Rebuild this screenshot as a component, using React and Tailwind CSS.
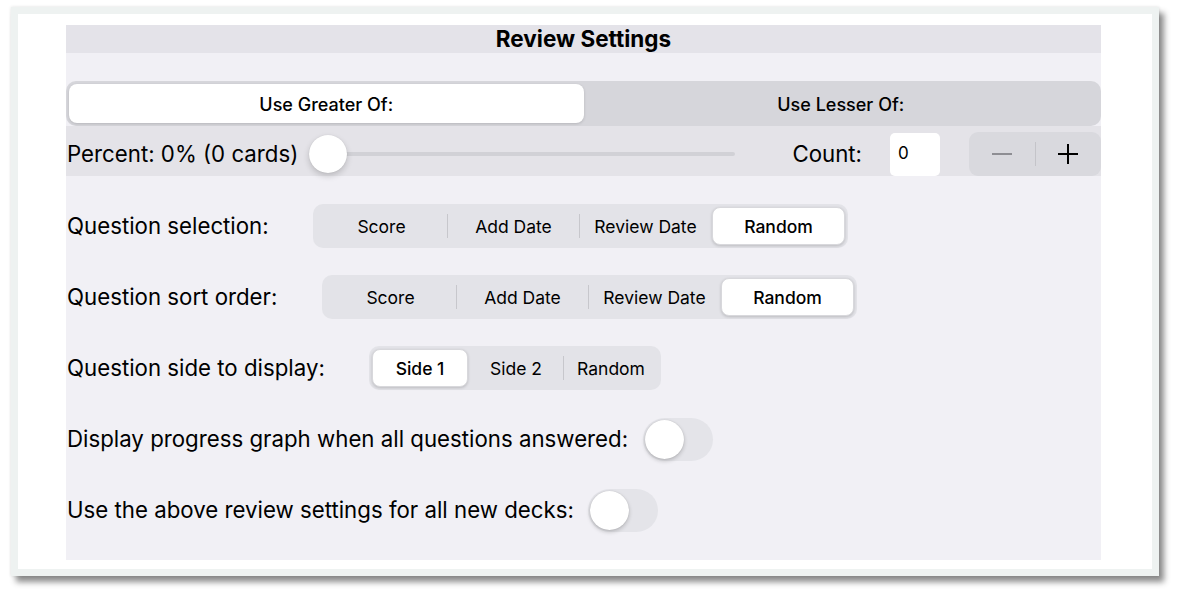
import React from "react";

function Segmented({ items, selected, className }) {
  const nodes = [];
  items.forEach((it, i) => {
    if (i > 0) {
      const show = i - 1 !== selected && i !== selected;
      nodes.push(
        <div
          key={"d" + i}
          className={
            "w-px h-[24px] self-center flex-none " +
            (show ? "bg-[#c7c7cc]" : "bg-transparent")
          }
        />
      );
    }
    const sel = i === selected;
    nodes.push(
      <div
        key={"s" + i}
        className={
          "flex-1 flex items-center justify-center pt-[2px] text-[17.5px] text-black whitespace-nowrap " +
          (sel
            ? "bg-white rounded-[8px] font-medium shadow-[0_1px_3px_rgba(0,0,0,0.18)] border-[0.5px] border-[#d8d8dc]"
            : "")
        }
      >
        {it}
      </div>
    );
  });
  return (
    <div
      className={
        "h-[44px] bg-[#e3e3e8] rounded-[10px] p-[3px] flex flex-none " + className
      }
    >
      {nodes}
    </div>
  );
}

function Toggle() {
  return (
    <div className="w-[70px] h-[43px] rounded-full bg-[#e4e4e9] p-[2px] flex items-center flex-none">
      <div className="w-[39px] h-[39px] rounded-full bg-white shadow-[0_2px_4px_rgba(0,0,0,0.2),0_0_1px_rgba(0,0,0,0.2)]" />
    </div>
  );
}

export default function App() {
  return (
    <div className="w-[1178px] h-[598px] bg-white pt-[7px] pl-[11px] font-['Inter',sans-serif] text-black">
      <div className="w-[1148px] h-[569px] border-[7px] border-[#eef2f1] bg-white shadow-[5px_6px_6px_rgba(0,0,0,0.45),0_0_3px_rgba(0,0,0,0.12)] pt-[11px] pl-[48px]">
        <div className="w-[1035px] h-[535px] bg-[#f1f0f5] flex flex-col">
          <div className="h-[28px] bg-[#e4e3e9] flex items-center justify-center text-[22.5px] font-bold flex-none">
            Review Settings
          </div>

          <div className="mt-[28px] h-[45px] bg-[#d6d6db] rounded-[10px] p-[3px] flex flex-none">
            <div className="flex-1 bg-white rounded-[8px] shadow-[0_1px_3px_rgba(0,0,0,0.15)] flex items-center justify-center pt-[1px] text-[18px] font-medium">
              Use Greater Of:
            </div>
            <div className="flex-1 flex items-center justify-center pt-[1px] text-[18px] font-medium">
              Use Lesser Of:
            </div>
          </div>

          <div className="h-[50px] bg-[#e4e3e8] flex items-center pt-[6px] pl-[1px] flex-none">
            <div className="w-[242px] text-[22.25px] whitespace-nowrap flex-none">
              Percent: 0% (0 cards)
            </div>
            <div className="relative w-[426px] h-[38px] flex-none">
              <div className="absolute left-[19px] right-0 top-[17px] h-[4px] rounded-full bg-[#d1d1d6]" />
              <div className="absolute left-0 top-0 w-[38px] h-[38px] rounded-full bg-white shadow-[0_3px_6px_rgba(0,0,0,0.18),0_0_1px_rgba(0,0,0,0.15)]" />
            </div>
            <div className="ml-auto flex items-center">
              <div className="text-[22.25px] whitespace-nowrap">Count:</div>
              <div className="ml-[28px] w-[50px] h-[43px] bg-white rounded-[5px] flex items-center pl-[8px] text-[17px]">
                0
              </div>
              <div className="ml-[29px] w-[132px] h-[44px] bg-[#d9d9de] rounded-[9px] flex items-center">
                <div className="flex-1 flex items-center justify-center">
                  <div className="w-[20px] h-[2px] bg-[#8e8e93]" />
                </div>
                <div className="w-px h-[24px] bg-[#c4c4c9]" />
                <div className="flex-1 flex items-center justify-center">
                  <svg width="22" height="22" viewBox="0 0 22 22">
                    <path d="M11 1v20M1 11h20" stroke="#000" strokeWidth="2" />
                  </svg>
                </div>
              </div>
            </div>
          </div>

          <div className="flex flex-col pt-[28px] gap-[27px] pl-[1px]">
            <div className="h-[44px] flex items-center">
              <div className="w-[246px] flex-none text-[22.25px] whitespace-nowrap">
                Question selection:
              </div>
              <Segmented
                className="w-[535px]"
                items={["Score", "Add Date", "Review Date", "Random"]}
                selected={3}
              />
            </div>
            <div className="h-[44px] flex items-center">
              <div className="w-[255px] flex-none text-[22.25px] whitespace-nowrap">
                Question sort order:
              </div>
              <Segmented
                className="w-[535px]"
                items={["Score", "Add Date", "Review Date", "Random"]}
                selected={3}
              />
            </div>
            <div className="h-[44px] flex items-center">
              <div className="w-[302px] flex-none text-[22.25px] whitespace-nowrap">
                Question side to display:
              </div>
              <Segmented
                className="w-[292px]"
                items={["Side 1", "Side 2", "Random"]}
                selected={0}
              />
            </div>
            <div className="h-[44px] flex items-center">
              <div className="w-[576px] flex-none text-[22.25px] whitespace-nowrap">
                Display progress graph when all questions answered:
              </div>
              <Toggle />
            </div>
            <div className="h-[44px] flex items-center">
              <div className="w-[521px] flex-none text-[22.25px] whitespace-nowrap">
                Use the above review settings for all new decks:
              </div>
              <Toggle />
            </div>
          </div>
        </div>
      </div>
    </div>
  );
}
